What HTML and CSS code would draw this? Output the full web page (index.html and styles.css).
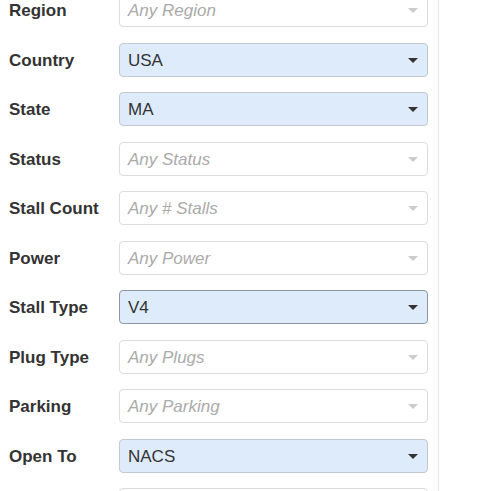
FILE: index.html
```html
<!DOCTYPE html>
<html lang="en">
<head>
    <meta charset="UTF-8">
    <meta name="viewport" content="width=device-width, initial-scale=1.0">
    <title>Filters</title>
    <link rel="stylesheet" href="styles.css">
</head>
<body>
    <div class="panel">
        <div class="filters">
            <div class="row">
                <label>Region</label>
                <div class="select empty"><span>Any Region</span><i class="arrow"></i></div>
            </div>
            <div class="row">
                <label>Country</label>
                <div class="select picked"><span>USA</span><i class="arrow"></i></div>
            </div>
            <div class="row">
                <label>State</label>
                <div class="select picked"><span>MA</span><i class="arrow"></i></div>
            </div>
            <div class="row">
                <label>Status</label>
                <div class="select empty"><span>Any Status</span><i class="arrow"></i></div>
            </div>
            <div class="row">
                <label>Stall Count</label>
                <div class="select empty"><span>Any # Stalls</span><i class="arrow"></i></div>
            </div>
            <div class="row">
                <label>Power</label>
                <div class="select empty"><span>Any Power</span><i class="arrow"></i></div>
            </div>
            <div class="row">
                <label>Stall Type</label>
                <div class="select picked focus"><span>V4</span><i class="arrow"></i></div>
            </div>
            <div class="row">
                <label>Plug Type</label>
                <div class="select empty"><span>Any Plugs</span><i class="arrow"></i></div>
            </div>
            <div class="row">
                <label>Parking</label>
                <div class="select empty"><span>Any Parking</span><i class="arrow"></i></div>
            </div>
            <div class="row">
                <label>Open To</label>
                <div class="select picked"><span>NACS</span><i class="arrow"></i></div>
            </div>
            <div class="row">
                <label></label>
                <div class="select empty"></div>
            </div>
        </div>
    </div>
</body>
</html>
```

FILE: styles.css
```css
html, body {
    margin: 0;
    background: #fff;
    overflow: hidden;
}
body {
    font-family: "Liberation Sans", Arial, sans-serif;
    color: #333;
}
.panel {
    width: 438px;
    height: 491px;
    overflow: hidden;
    border-right: 1px solid #e6e6e6;
}
.filters {
    display: flex;
    flex-direction: column;
    gap: 15.5px;
    margin-top: -7px;
    padding: 0 10px 0 9px;
}
.row {
    display: flex;
    align-items: center;
}
.row label {
    width: 110px;
    flex: none;
    padding-top: 2px;
    font-size: 17px;
    font-weight: bold;
    color: #333;
}
.select {
    flex: 1;
    height: 34px;
    box-sizing: border-box;
    border: 1px solid #dcdcdc;
    border-radius: 4px;
    display: flex;
    align-items: center;
    padding: 0 9px 0 8px;
    font-size: 17px;
}
.select span {
    flex: 1;
    padding-top: 2px;
}
.select.empty span {
    color: #aaa;
    font-style: italic;
}
.select.picked {
    background: #deebfb;
    border-color: #c3c9d1;
}
.select.focus {
    border-color: #8e98a5;
}
.arrow {
    width: 0;
    height: 0;
    border-left: 5px solid transparent;
    border-right: 5px solid transparent;
    border-top: 5px solid #ccc;
    margin-top: 1px;
}
.picked .arrow {
    border-top-color: #333;
}
```
